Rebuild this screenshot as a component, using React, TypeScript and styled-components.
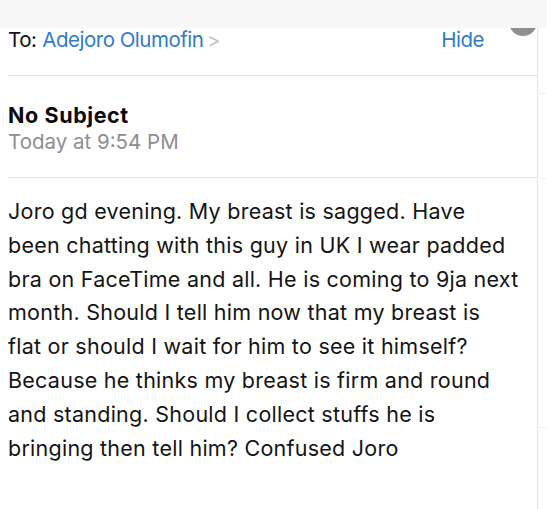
import React from "react";
import styled, { createGlobalStyle } from "styled-components";

const Global = createGlobalStyle`
  html, body { margin: 0; padding: 0; background: #ffffff; }
  body { font-family: Inter, "Liberation Sans", Arial, sans-serif; -webkit-font-smoothing: antialiased; }
`;

const Page = styled.div`
  width: 547px;
  height: 509px;
  display: flex;
  flex-direction: column;
  overflow: hidden;
  background: #ffffff;
`;

const TopBand = styled.div`
  height: 28px;
  flex: none;
  background: #f7f7f7;
`;

const Body = styled.div`
  flex: 1;
  display: flex;
`;

const Main = styled.div`
  position: relative;
  width: 537px;
  border-right: 1px solid #e4e4e4;
  overflow: hidden;
`;

const Gutter = styled.div`
  flex: 1;
  position: relative;
`;

const Tick = styled.div<{ $top: number }>`
  position: absolute;
  left: 1px;
  width: 7px;
  top: ${(p) => p.$top}px;
  height: 1px;
  background: #eeeeee;
`;

const ScrollKnob = styled.div`
  position: absolute;
  top: -20px;
  right: 0px;
  width: 28px;
  height: 28px;
  border-radius: 50%;
  background: #8e8e93;
`;

const Section = styled.div<{ $h: number }>`
  height: ${(p) => p.$h}px;
  margin-left: 8px;
  border-bottom: 1px solid #e2e2e2;
  box-sizing: border-box;
`;

const ToRow = styled.div`
  display: flex;
  align-items: baseline;
  padding-top: 0px;
  padding-right: 53px;
  font-size: 20.5px;
  line-height: 24px;
  letter-spacing: -0.5px;
`;

const Label = styled.span`
  color: #111111;
`;

const Recipient = styled.span`
  color: #2f7bc8;
  margin-left: 6px;
`;

const Chevron = styled.span`
  color: #c4c4c8;
  margin-left: 4px;
  font-size: 20px;
`;

const Hide = styled.span`
  margin-left: auto;
  color: #2f7bc8;
`;

const Subject = styled.div`
  padding-top: 26px;
  font-size: 21.5px;
  line-height: 26px;
  font-weight: 700;
  letter-spacing: 0.6px;
  color: #0a0a0a;
`;

const DateLine = styled.div`
  margin-top: 2px;
  font-size: 20.5px;
  line-height: 24px;
  color: #8e8e93;
`;

const Message = styled.div`
  padding: 17px 0 0 8px;
  font-size: 21.5px;
  line-height: 33.8px;
  letter-spacing: 0.25px;
  color: #141414;
  white-space: nowrap;
`;

const lines = [
  "Joro gd evening. My breast is sagged. Have",
  "been chatting with this guy in UK I wear padded",
  "bra on FaceTime and all. He is coming to 9ja next",
  "month. Should I tell him now that my breast is",
  "flat or should I wait for him to see it himself?",
  "Because he thinks my breast is firm and round",
  "and standing. Should I collect stuffs he is",
  "bringing then tell him? Confused Joro",
];

export default function App() {
  return (
    <>
      <Global />
      <Page>
        <TopBand />
        <Body>
          <Main>
            <ScrollKnob />
            <Section $h={48}>
              <ToRow>
                <Label>To:</Label>
                <Recipient>Adejoro Olumofin</Recipient>
                <Chevron>&gt;</Chevron>
                <Hide>Hide</Hide>
              </ToRow>
            </Section>
            <Section $h={102}>
              <Subject>No Subject</Subject>
              <DateLine>Today at 9:54 PM</DateLine>
            </Section>
            <Message>
              {lines.map((l, i) => (
                <div key={i}>{l}</div>
              ))}
            </Message>
          </Main>
          <Gutter>
            <Tick $top={65} />
            <Tick $top={150} />
            <Tick $top={399} />
          </Gutter>
        </Body>
      </Page>
    </>
  );
}
